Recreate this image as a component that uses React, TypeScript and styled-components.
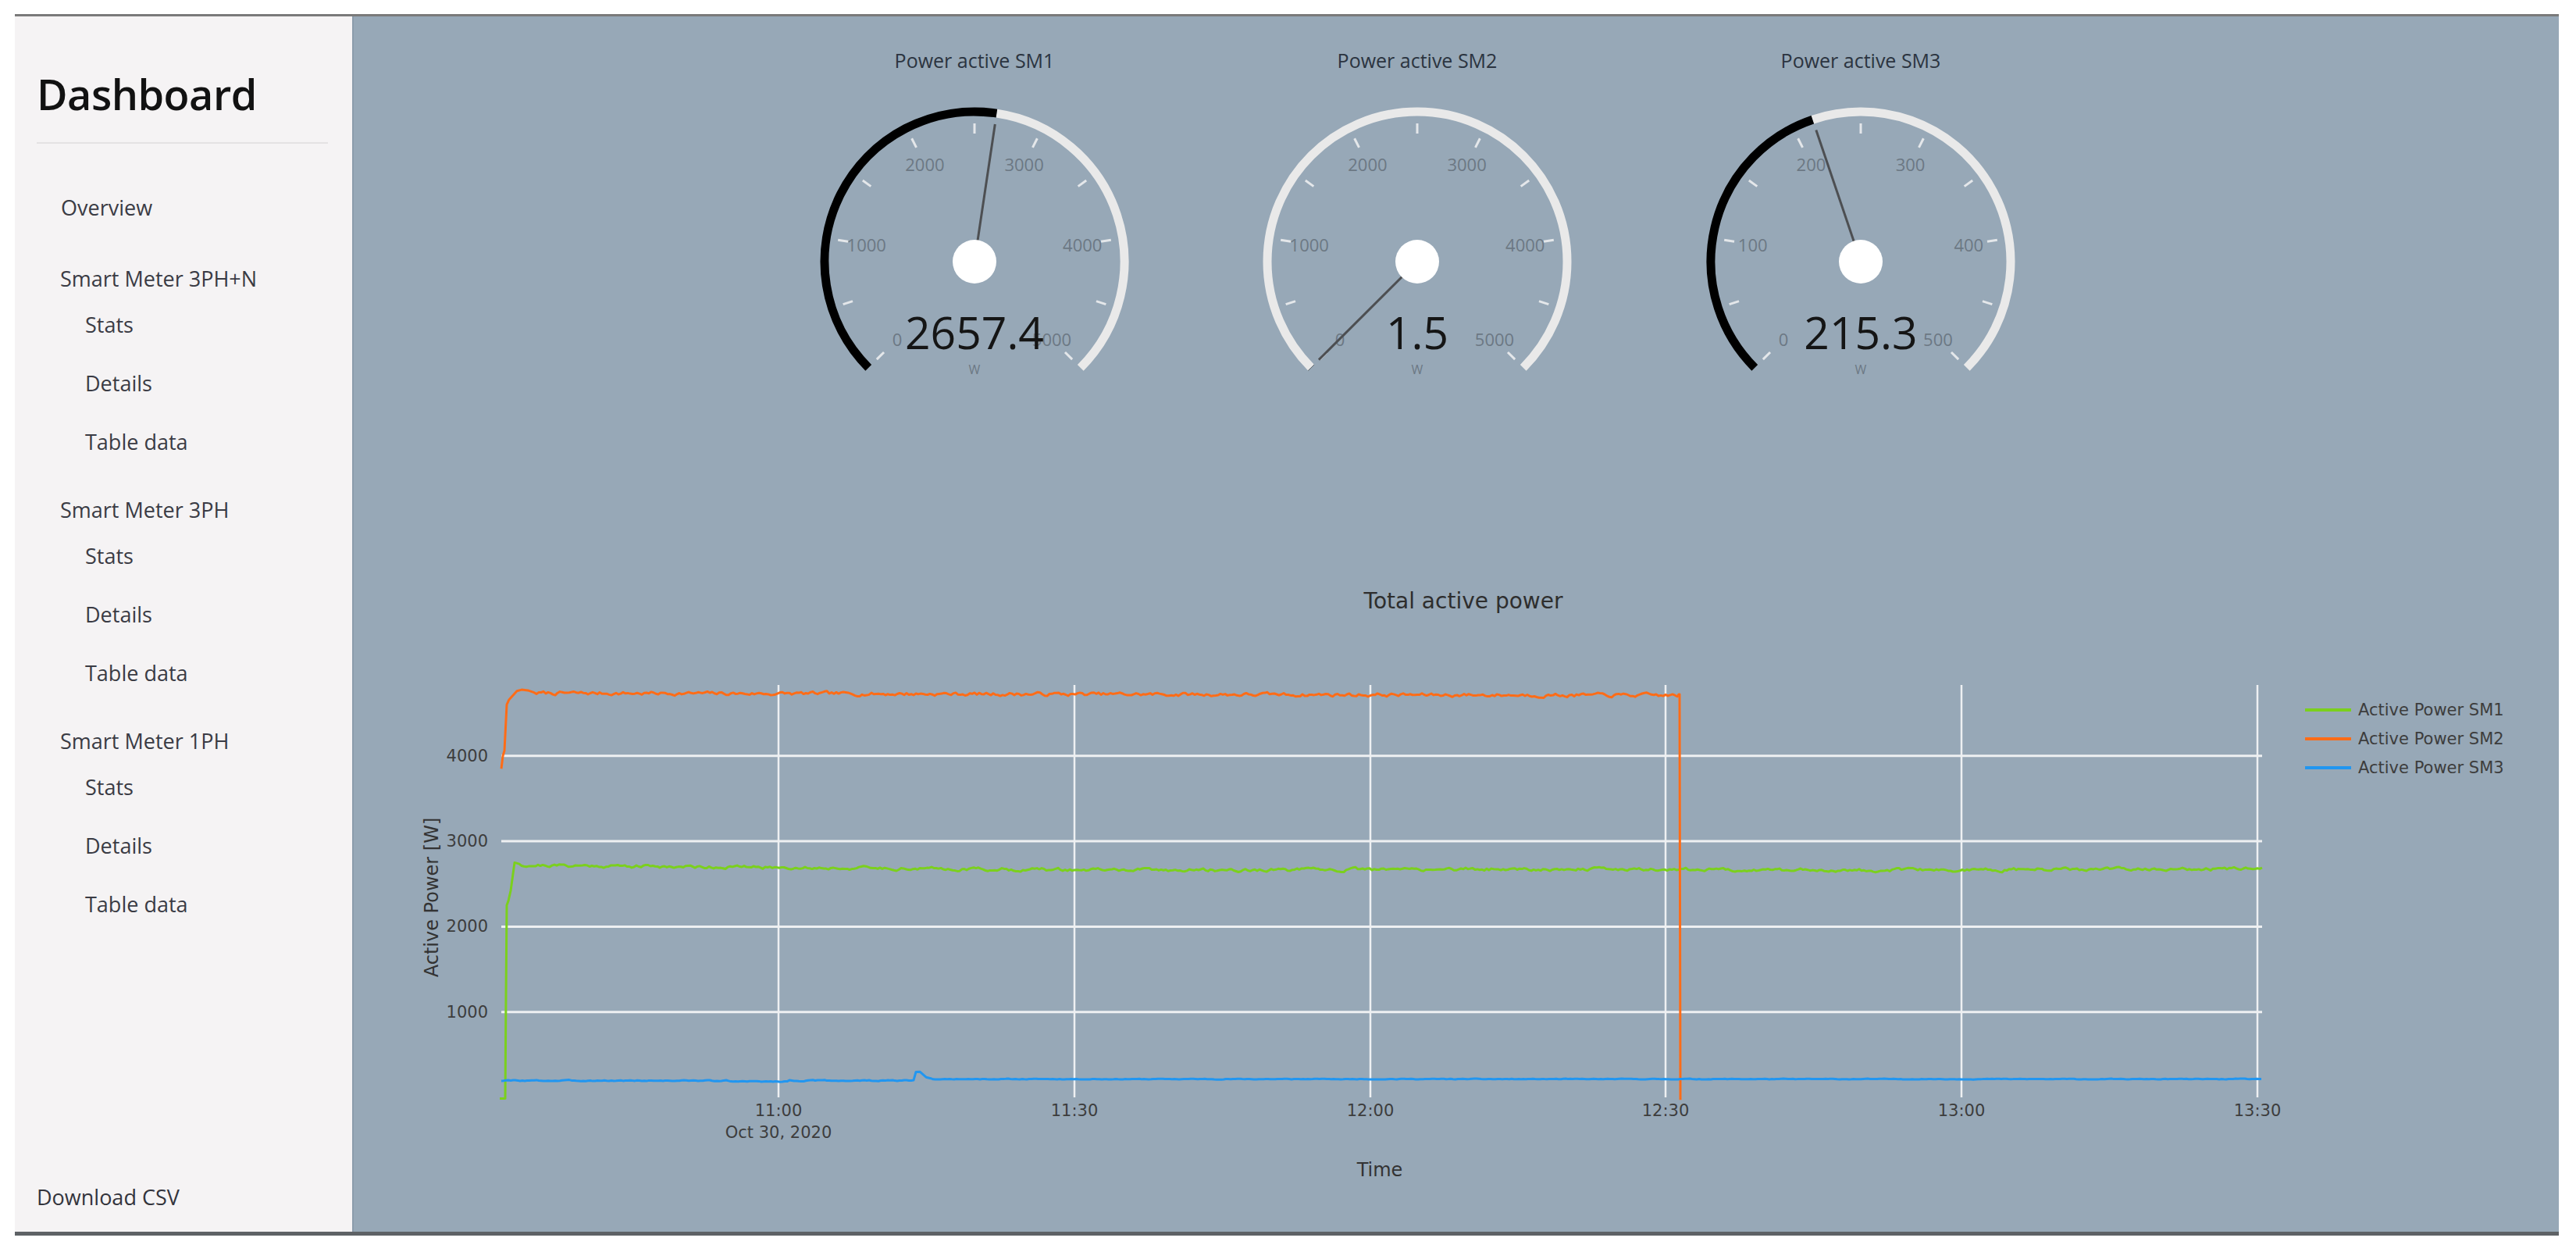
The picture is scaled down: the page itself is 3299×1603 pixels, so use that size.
import React from 'react';
import styled, { createGlobalStyle } from 'styled-components';

const GlobalStyle = createGlobalStyle`
  html, body {
    margin: 0;
    padding: 0;
    background: #ffffff;
  }
  body {
    font-family: "Open Sans", "Noto Sans", sans-serif;
  }
`;

// ---------- data ----------

const rng = (seed: number) => {
  let s = seed;
  return () => {
    s = (s * 1664525 + 1013904223) % 4294967296;
    return s / 4294967296;
  };
};

const BASE_Y = 1405;
const PX_PER_W = 0.1093;
const yOf = (w: number) => BASE_Y - w * PX_PER_W;

type Pt = [number, number];

const toPoints = (pts: Pt[]) =>
  pts.map(([x, w]) => `${x.toFixed(1)},${yOf(w).toFixed(1)}`).join(' ');

const noisy = (
  from: number,
  to: number,
  base: (x: number) => number,
  amp: number,
  seed: number
): Pt[] => {
  const r = rng(seed);
  const out: Pt[] = [];
  let n = 0;
  for (let x = from; x <= to; x += 3) {
    n = n * 0.6 + (r() - 0.5) * amp;
    out.push([x, base(x) + n]);
  }
  return out;
};

const sm2: Pt[] = [
  [642, 3850],
  [644, 4000],
  [646, 4060],
  [649, 4600],
  [652, 4660],
  [657, 4710],
  [662, 4760],
  [668, 4775],
  [676, 4768],
  [684, 4742],
  ...noisy(687, 2148, (x) => 4735 - (x - 687) * 0.018, 34, 7),
  [2150, 4722],
  [2151, 4722],
  [2152, -30],
];

const sm1: Pt[] = [
  [640, -15],
  [647, -15],
  [648, 1200],
  [649, 2250],
  [651, 2300],
  [654, 2420],
  [659, 2750],
  [665, 2735],
  ...noisy(668, 2897, (x) => (x < 1300 ? 2720 - (x - 668) * 0.08 : 2668 + Math.sin(x / 140) * 6), 30, 21),
];

const sm3: Pt[] = [
  ...noisy(642, 1168, (x) => (x > 930 && x < 1010 ? 186 : 196), 10, 3),
  [1170, 200],
  [1173, 298],
  [1178, 300],
  [1186, 236],
  [1192, 222],
  ...noisy(1195, 2897, () => 214, 6, 11),
];

const series = [
  { name: 'Active Power SM1', color: '#7bd01d', points: sm1 },
  { name: 'Active Power SM2', color: '#ff6c17', points: sm2 },
  { name: 'Active Power SM3', color: '#2196f0', points: sm3 },
];

const xTicks = [
  { x: 997, label: '11:00', sub: 'Oct 30, 2020' },
  { x: 1376, label: '11:30' },
  { x: 1755, label: '12:00' },
  { x: 2133, label: '12:30' },
  { x: 2512, label: '13:00' },
  { x: 2891, label: '13:30' },
];

const yTicks = [1000, 2000, 3000, 4000];

const gauges = [
  { title: 'Power active SM1', value: 2657.4, max: 5000 },
  { title: 'Power active SM2', value: 1.5, max: 5000 },
  { title: 'Power active SM3', value: 215.3, max: 500 },
];

const groups = ['Smart Meter 3PH+N', 'Smart Meter 3PH', 'Smart Meter 1PH'];
const subItems = ['Stats', 'Details', 'Table data'];

// ---------- layout ----------

const Frame = styled.div`
  display: flex;
  width: 3258px;
  height: 1556px;
  margin: 18px 0 0 19px;
  border-top: 3px solid #7a7a7a;
  border-bottom: 5px solid #5e6266;
`;

const Sidebar = styled.aside`
  width: 432px;
  flex-shrink: 0;
  box-sizing: border-box;
  display: flex;
  flex-direction: column;
  padding: 59px 0 23px 28px;
  background: #f5f3f4;
`;

const Brand = styled.h1`
  margin: 0;
  height: 80px;
  line-height: 80px;
  font-size: 54px;
  font-weight: 600;
  letter-spacing: -0.5px;
  color: #121212;
`;

const Divider = styled.hr`
  margin: 22px 31px 0 0;
  height: 2px;
  border: none;
  background: #e4e2e3;
`;

const NavList = styled.nav`
  display: flex;
  flex-direction: column;
  margin-top: 59px;
`;

const NavGroup = styled.div<{ $gap: number }>`
  display: flex;
  flex-direction: column;
  margin-top: ${(p) => p.$gap}px;
`;

const NavLink = styled.a<{ $indent: number; $tall?: boolean }>`
  display: flex;
  align-items: center;
  height: ${(p) => (p.$tall ? 75 : 44)}px;
  padding-left: ${(p) => p.$indent}px;
  font-size: 27px;
  color: #3a3b44;
  text-decoration: none;
  white-space: nowrap;
`;

const DownloadLink = styled.a`
  display: flex;
  align-items: center;
  height: 44px;
  margin-top: auto;
  font-size: 27px;
  color: #33343c;
  text-decoration: none;
`;

const Main = styled.main`
  flex: 1;
  min-width: 0;
  display: flex;
  flex-direction: column;
  background: #97a8b7;
  border-left: 2px solid #8b9bab;
`;

const GaugeRow = styled.section`
  display: grid;
  grid-template-columns: 566px 568px 568px;
  justify-items: center;
  padding: 40px 0 0 512px;
`;

const GaugeCard = styled.div`
  display: flex;
  flex-direction: column;
  align-items: center;
`;

const GaugeTitle = styled.div`
  height: 32px;
  line-height: 32px;
  font-size: 25px;
  color: #2b3440;
  white-space: nowrap;
`;

const ChartTitle = styled.h2`
  margin: 237px 0 0;
  padding-left: 18px;
  height: 40px;
  line-height: 40px;
  text-align: center;
  font-family: "DejaVu Sans", Verdana, sans-serif;
  font-size: 28px;
  font-weight: 400;
  color: #2e2e2e;
`;

const ChartSvg = styled.svg`
  display: block;
  font-family: "DejaVu Sans", Verdana, sans-serif;
`;

// ---------- gauge ----------

const GW = 420;
const GH = 420;
const CX = 210;
const CY = 242;
const R = 192;

const pt = (r: number, deg: number): Pt => {
  const a = (deg * Math.PI) / 180;
  return [CX + r * Math.sin(a), CY - r * Math.cos(a)];
};

const arc = (r: number, from: number, to: number) => {
  const [x1, y1] = pt(r, from);
  const [x2, y2] = pt(r, to);
  const large = to - from > 180 ? 1 : 0;
  return `M${x1} ${y1} A${r} ${r} 0 ${large} 1 ${x2} ${y2}`;
};

const Gauge = ({ title, value, max }: { title: string; value: number; max: number }) => {
  const ang = -135 + (value / max) * 270;
  const ticks = Array.from({ length: 11 }, (_, i) => -135 + i * 27);
  const labels = Array.from({ length: 6 }, (_, i) => ({ v: (max / 5) * i, a: -135 + i * 54 }));
  const [nx, ny] = pt(178, ang);

  return (
    <GaugeCard>
      <GaugeTitle>{title}</GaugeTitle>
      <svg width={GW} height={GH} viewBox={`0 0 ${GW} ${GH}`}>
        <path d={arc(R, ang, 135)} fill="none" stroke="#e9e9e9" strokeWidth={11} />
        <path d={arc(R, -135, ang)} fill="none" stroke="#000000" strokeWidth={11} />
        {ticks.map((a) => {
          const [x1, y1] = pt(164, a);
          const [x2, y2] = pt(177, a);
          return <line key={a} x1={x1} y1={y1} x2={x2} y2={y2} stroke="#e4e7ea" strokeWidth={3} />;
        })}
        {labels.map(({ v, a }) => {
          const [x, y] = pt(140, a);
          return (
            <text
              key={v}
              x={x}
              y={y}
              textAnchor="middle"
              dominantBaseline="central"
              fontSize={22}
              fill="#6c7884"
              fontFamily='"Open Sans", sans-serif'
            >
              {v}
            </text>
          );
        })}
        <line x1={CX} y1={CY} x2={nx} y2={ny} stroke="#4d4f52" strokeWidth={3} />
        <circle cx={CX} cy={CY} r={28} fill="#ffffff" />
        <text
          x={CX}
          y={CY + 112}
          textAnchor="middle"
          fontSize={57}
          fill="#151515"
          fontFamily='"Open Sans", sans-serif'
        >
          {value}
        </text>
        <text
          x={CX}
          y={CY + 144}
          textAnchor="middle"
          fontSize={16}
          fill="#6c7884"
          fontFamily='"Open Sans", sans-serif'
        >
          W
        </text>
      </svg>
    </GaugeCard>
  );
};

// ---------- chart ----------

const Chart = () => (
  <ChartSvg width={2824} height={760} viewBox="453 790 2824 760">
    {yTicks.map((w) => (
      <g key={w}>
        <line x1={642} x2={2897} y1={yOf(w)} y2={yOf(w)} stroke="#eef0f2" strokeWidth={3} />
        <text x={625} y={yOf(w)} textAnchor="end" dominantBaseline="central" fontSize={21} fill="#3d3d3d">
          {w}
        </text>
      </g>
    ))}
    {xTicks.map((t) => (
      <g key={t.label}>
        <line x1={t.x} x2={t.x} y1={877} y2={BASE_Y} stroke="#eef0f2" strokeWidth={2.5} />
        <text x={t.x} y={1422} textAnchor="middle" dominantBaseline="central" fontSize={21} fill="#3d3d3d">
          {t.label}
        </text>
        {t.sub && (
          <text x={t.x} y={1450} textAnchor="middle" dominantBaseline="central" fontSize={21} fill="#3d3d3d">
            {t.sub}
          </text>
        )}
      </g>
    ))}
    {series.map((s) => (
      <polyline
        key={s.name}
        points={toPoints(s.points)}
        fill="none"
        stroke={s.color}
        strokeWidth={3}
        strokeLinejoin="round"
      />
    ))}
    <text x={1767} y={1498} textAnchor="middle" dominantBaseline="central" fontSize={24} fill="#333">
      Time
    </text>
    <text
      x={553}
      y={1149}
      textAnchor="middle"
      dominantBaseline="central"
      fontSize={24}
      fill="#333"
      transform="rotate(-90 553 1149)"
    >
      Active Power [W]
    </text>
    {series.map((s, i) => {
      const y = 909 + i * 37;
      return (
        <g key={s.name}>
          <line x1={2952} x2={3011} y1={y} y2={y} stroke={s.color} strokeWidth={4} />
          <text x={3020} y={y} dominantBaseline="central" fontSize={21} fill="#3d3d3d">
            {s.name}
          </text>
        </g>
      );
    })}
  </ChartSvg>
);

// ---------- app ----------

export default function App() {
  return (
    <>
      <GlobalStyle />
      <Frame>
        <Sidebar>
          <Brand>Dashboard</Brand>
          <Divider />
          <NavList>
            <NavLink $indent={31}>Overview</NavLink>
            {groups.map((g, i) => (
              <NavGroup key={g} $gap={i === 0 ? 47 : 27}>
                <NavLink $indent={30}>{g}</NavLink>
                {subItems.map((s) => (
                  <NavLink key={s} $indent={62} $tall>
                    {s}
                  </NavLink>
                ))}
              </NavGroup>
            ))}
          </NavList>
          <DownloadLink>Download CSV</DownloadLink>
        </Sidebar>
        <Main>
          <GaugeRow>
            {gauges.map((g) => (
              <Gauge key={g.title} {...g} />
            ))}
          </GaugeRow>
          <ChartTitle>Total active power</ChartTitle>
          <Chart />
        </Main>
      </Frame>
    </>
  );
}
